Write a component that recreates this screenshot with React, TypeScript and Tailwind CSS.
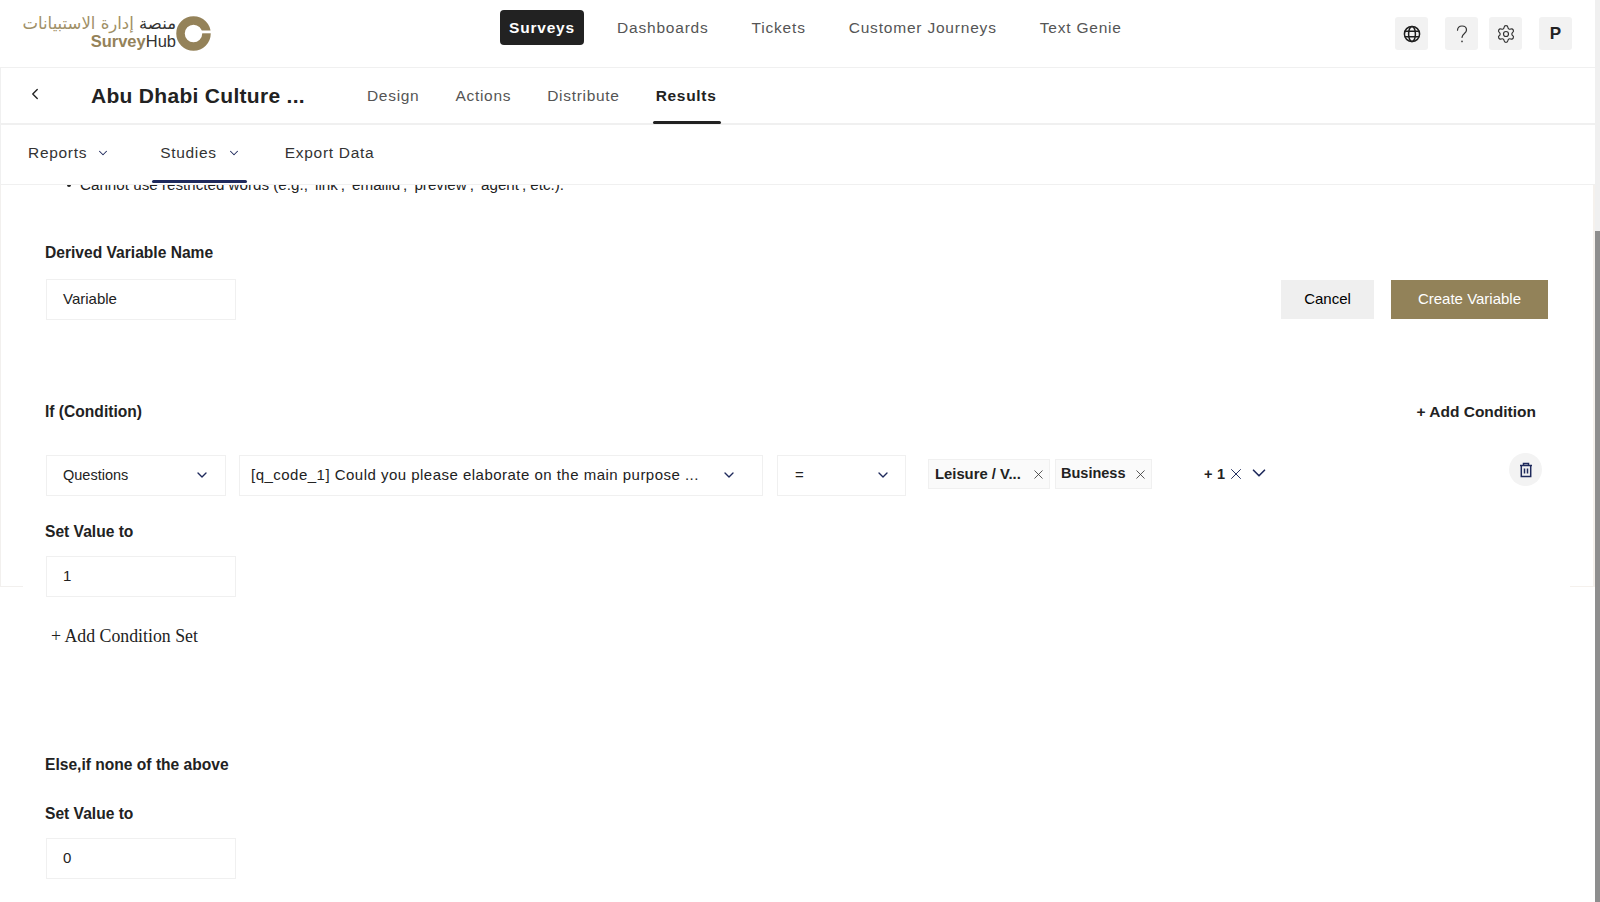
import { ChevronDown, ChevronLeft, Settings, X } from 'lucide-react'

const navy = '#1f2a5c'

function Globe() {
  return (
    <svg width="18" height="18" viewBox="0 0 18 18" fill="none" stroke="#1f1f1f" strokeWidth="1.5">
      <circle cx="9" cy="9" r="7.6" />
      <ellipse cx="9" cy="9" rx="3.4" ry="7.6" />
      <path d="M1.8 6.3h14.4M1.8 11.7h14.4" />
    </svg>
  )
}

function Question() {
  return (
    <svg width="18" height="20" viewBox="0 0 18 20" fill="none" stroke="#333" strokeWidth="1.2" strokeLinecap="round">
      <path d="M4.5 6.2C4.7 3.6 6.6 2 9 2c2.600 0 4.500 1.700 4.500 4 0 3.400-4.300 3.500-4.500 7.400" />
      <path d="M9 17.200v.4" strokeWidth="1.600" />
    </svg>
  )
}

function Trash() {
  return (
    <svg width="14" height="16" viewBox="0 0 14 16" fill="none" stroke={navy} strokeWidth="1.500">
      <path d="M1 3.500h12M4.500 3.200V1.500h5v1.700M2.300 3.500v11h9.400v-11" />
      <path d="M5.500 6.500v5M8.500 6.500v5" />
    </svg>
  )
}

function Logo() {
  return (
    <div className="flex w-[190px] h-[36px] ml-[22px] mt-[15px] items-start">
      <div className="w-[154px] flex flex-col items-end">
        <div dir="rtl" className="h-[17px] leading-[17px] text-[16.500px] whitespace-nowrap font-['DejaVu_Sans',sans-serif]">
          <span className="text-[#333]">منصة</span> <span className="text-[#a08f66]">إدارة الاستبيانات</span>
        </div>
        <div className="text-[16.500px] leading-[18px]">
          <span className="font-bold text-[#948259]">Survey</span>
          <span className="text-[#333]">Hub</span>
        </div>
      </div>
      <svg className="mt-[1px]" width="35" height="35" viewBox="0 0 35 35" fill="none">
        <circle cx="17.500" cy="17.500" r="13" stroke="#948259" strokeWidth="8.500" />
        <rect x="19" y="14.500" width="16" height="2.800" fill="#fff" />
      </svg>
    </div>
  )
}

function IconBox({ className, children }: { className?: string; children: React.ReactNode }) {
  return (
    <div className={`w-[33px] h-[33px] rounded-[3px] bg-[#f2f2f2] flex items-center justify-center ${className ?? ''}`}>
      {children}
    </div>
  )
}

function TopBar() {
  return (
    <div className="h-[68px] border-b-[1px] border-[#f0f0f0] flex items-start">
      <Logo />
      <div className="ml-[288px] mt-[10px] flex items-center h-[35px] text-[15.500px] tracking-[0.8px] text-[#555] gap-[43px]">
        <div className="h-[35px] w-[84px] mr-[-10px] rounded-[4px] bg-[#222] text-white font-bold flex items-center justify-center">
          Surveys
        </div>
        <span>Dashboards</span>
        <span>Tickets</span>
        <span>Customer Journeys</span>
        <span>Text Genie</span>
      </div>
      <div className="ml-auto mr-[23px] mt-[17px] flex">
        <IconBox><Globe /></IconBox>
        <IconBox className="ml-[17px]"><Question /></IconBox>
        <IconBox className="ml-[11px]"><Settings size={20} strokeWidth={1.400} color="#333" /></IconBox>
        <IconBox className="ml-[17px] font-bold text-[17px] text-[#222]">P</IconBox>
      </div>
    </div>
  )
}

function TitleBar() {
  return (
    <div className="h-[57px] border-b-[2px] border-[#f0f0f0] flex items-center border-l border-l-[#f0f0f0]">
      <ChevronLeft size={18} strokeWidth={1.800} color="#222" className="ml-[25px] mb-[3px]" />
      <span className="ml-[47px] text-[21px] leading-none font-bold tracking-[0.3px] text-[#222]">Abu Dhabi Culture ...</span>
      <div className="ml-[62px] flex h-full items-center pt-[1px] text-[15.500px] tracking-[0.7px] text-[#555] gap-[36px]">
        <span>Design</span>
        <span>Actions</span>
        <span>Distribute</span>
        <div className="relative h-full flex items-center font-bold text-[#222]">
          Results
          <div className="absolute bottom-[-1px] left-[-3px] right-[-4px] h-[3px] rounded-[2px] bg-[#222]" />
        </div>
      </div>
    </div>
  )
}

function SubTabs() {
  return (
    <div className="relative z-10 h-[60px] bg-white border-b-[1px] border-[#f0f0f0] flex items-center border-l border-l-[#f0f0f0] pb-[4px] text-[15.500px] tracking-[0.7px] text-[#333]">
      <div className="ml-[27px] flex items-center">
        Reports
        <ChevronDown size={14} strokeWidth={1.800} color={navy} className="ml-[9px]" />
      </div>
      <div className="relative ml-[50px] flex items-center">
        Studies
        <ChevronDown size={14} strokeWidth={1.800} color={navy} className="ml-[10px]" />
        <div className="absolute top-[39px] left-[-8px] right-[-6px] h-[3px] rounded-[2px] bg-[#1f2a5c]" />
      </div>
      <span className="ml-[44px]">Export Data</span>
    </div>
  )
}

function Field({ value }: { value: string }) {
  return (
    <div className="w-[190px] h-[41px] ml-[1px] border-[1px] border-[#f0f0f0] pl-[16px] flex items-center text-[15px] text-[#222]">
      {value}
    </div>
  )
}

function Select({ value, className, chevron }: { value: string; className: string; chevron: string }) {
  return (
    <div className={`h-[41px] border-[1px] border-[#f0f0f0] flex items-center text-[#222] whitespace-nowrap ${className}`}>
      <span>{value}</span>
      <ChevronDown size={16} strokeWidth={2} color={navy} className={`absolute ${chevron}`} />
    </div>
  )
}

function Chip({ label, className }: { label: string; className: string }) {
  return (
    <div className={`h-[30px] bg-[#fafafa] border-[1px] border-[#f0f0f0] flex items-center font-bold text-[#222] relative ${className}`}>
      {label}
      <X size={15} strokeWidth={1.300} color="#333" className="absolute right-[3px] top-[7px]" />
    </div>
  )
}

function ConditionRow() {
  return (
    <div className="mt-[33px] h-[41px] relative flex text-[#222]">
      <Select value="Questions" className="w-[180px] ml-[1px] pl-[16px] text-[14.500px]" chevron="left-[149px] top-[12px]" />
      <Select
        value="[q_code_1] Could you please elaborate on the main purpose ..."
        className="w-[524px] ml-[13px] pl-[11px] text-[15px] tracking-[0.48px]"
        chevron="left-[676px] top-[12px]"
      />
      <Select value="=" className="w-[129px] ml-[14px] pl-[17px] text-[15px]" chevron="left-[830px] top-[12px]" />
      <Chip label="Leisure / V..." className="ml-[22px] mt-[4px] w-[122px] pl-[6px] text-[14.800px]" />
      <Chip label="Business" className="ml-[5px] mt-[4px] w-[97px] pl-[5px] text-[14.500px]" />
      <span className="ml-[52px] mt-[10px] h-[18px] leading-[18px] text-[14.500px] font-bold tracking-[0.3px]">+ 1</span>
      <X size={18} strokeWidth={1.300} color={navy} className="ml-[2px] mt-[10px]" />
      <ChevronDown size={22} strokeWidth={1.800} color={navy} className="ml-[3px] mt-[7px]" />
      <div className="absolute right-[6px] top-[-2px] w-[33px] h-[33px] rounded-full bg-[#f3f3f3] flex items-center justify-center">
        <Trash />
      </div>
    </div>
  )
}

export default function App() {
  return (
    <div className="relative flex h-[902px] overflow-hidden bg-white font-['Liberation_Sans',Arial,sans-serif]">
      <div className="flex-1 min-w-0">
        <TopBar />
        <TitleBar />
        <SubTabs />

        {/* body, scrolled so that the rules list is cut off by the tabs */}
        <div className="relative pl-[45px] pr-[47px]">
          <div className="absolute left-0 top-0 w-[23px] h-[411px] border-l-[1px] border-b-[1px] border-[#f2f0ee]" />
          <div className="absolute right-0 top-0 w-[25px] h-[411px] border-r-[2px] border-b-[1px] border-[#f5f1ed]" />

          <div className="relative z-0 mt-[-9px] ml-[22px] flex items-center h-[18px] text-[15.200px] text-[#222]">
            <span className="w-[4px] h-[4px] rounded-full bg-[#222] mr-[9px]" />
            Cannot use restricted words (e.g., 'link', 'emailid', 'preview', 'agent', etc.).
          </div>

          <div className="relative">
            <div className="mt-[49px] h-[20px] leading-[20px] text-[15.600px] font-bold text-[#222]">Derived Variable Name</div>
            <div className="mt-[16px] flex justify-between items-start">
              <Field value="Variable" />
              <div className="flex mt-[1px]">
                <div className="w-[93px] h-[39px] bg-[#efefef] text-black text-[15px] flex items-center justify-center">Cancel</div>
                <div className="ml-[17px] w-[157px] h-[39px] bg-[#928259] text-white text-[15px] flex items-center justify-center">Create Variable</div>
              </div>
            </div>

            <div className="mt-[82px] h-[20px] leading-[20px] flex justify-between text-[15.600px] font-bold text-[#222]">
              <span>If (Condition)</span>
              <span className="mr-[12px] text-[15.500px]">+ Add Condition</span>
            </div>

            <ConditionRow />

            <div className="mt-[26px] h-[20px] leading-[20px] text-[15.600px] font-bold text-[#222]">Set Value to</div>
            <div className="mt-[14px]"><Field value="1" /></div>

            <div className="mt-[27px] ml-[6px] h-[24px] leading-[24px] text-[17.800px] text-[#222] font-['Liberation_Serif',serif]">+ Add Condition Set</div>

            <div className="mt-[107px] h-[20px] leading-[20px] text-[15.600px] font-bold text-[#222]">Else,if none of the above</div>
            <div className="mt-[29px] h-[20px] leading-[20px] text-[15.600px] font-bold text-[#222]">Set Value to</div>
            <div className="mt-[14px]"><Field value="0" /></div>
          </div>
        </div>
      </div>

      {/* scrollbar */}
      <div className="w-[5px] bg-[#f0f0f0] pt-[231px]">
        <div className="h-full bg-[#8e8e8e]" />
      </div>
    </div>
  )
}
